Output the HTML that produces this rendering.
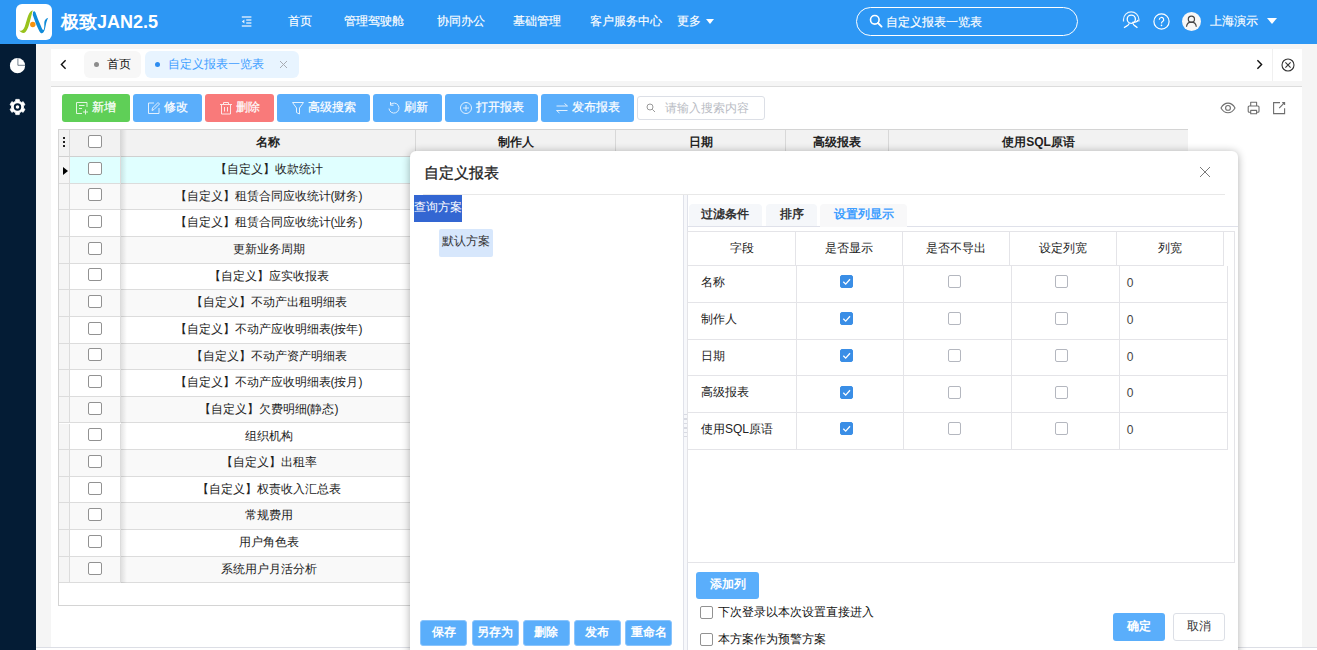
<!DOCTYPE html>
<html lang="zh">
<head>
<meta charset="utf-8">
<title>自定义报表一览表</title>
<style>
*{box-sizing:border-box;margin:0;padding:0}
html,body{width:1317px;height:650px;overflow:hidden}
body{position:relative;background:#f5f5f5;font-family:"Liberation Sans",sans-serif;font-size:12px;color:#222;line-height:1}
.abs{position:absolute}
.header{position:absolute;left:0;top:0;width:1317px;height:44px;background:#2d97f4}
.logo{position:absolute;left:16px;top:4px;width:36px;height:36px;background:#fff;border-radius:6px;overflow:hidden}
.brand{position:absolute;left:61px;top:11px;font-size:18px;font-weight:bold;color:#fff;line-height:22px;white-space:nowrap}
.nav{position:absolute;top:0;height:44px;line-height:42px;color:#fff;font-size:12px;white-space:nowrap;-webkit-text-stroke:.15px #fff}
.sidebar{position:absolute;left:0;top:44px;width:36px;height:606px;background:#041c35}
.tabbar{position:absolute;left:51px;top:49px;width:1251px;height:32px;background:#fff}
.tab{position:absolute;top:2px;height:27px;border-radius:6px;font-size:12px;line-height:27px;white-space:nowrap}
.panel{position:absolute;left:51px;top:86px;width:1251px;height:561px;background:#fff;border-top:1px solid #dcdcdc}
.foot{position:absolute;left:36px;top:647px;width:1281px;height:3px;background:#fff;border-top:1px solid #dcdee5}
.btn{position:absolute;top:94px;height:28px;border-radius:3px;color:#fff;font-size:12px;line-height:26px;white-space:nowrap}
.btn svg{position:absolute;top:7px;opacity:.82}
.btn span{position:absolute;top:0;-webkit-text-stroke:.2px #fff}
.grid{position:absolute;left:58px;top:129px;width:1130px;height:477px;border:1px solid #d4d4d4;border-right:none;background:#fff}
.gh{position:absolute;top:0;height:27px;background:#f2f2f2;border-right:1px solid #d8d8d8;border-bottom:1px solid #d0d0d0;text-align:center;font-weight:bold;line-height:24px;color:#222}
.gr{position:absolute;left:0;width:1127px;border-bottom:1px solid #dcdcdc}
.gr .c{position:absolute;top:0;height:100%;border-right:1px solid #dcdcdc}
.gr .t{position:absolute;left:62px;width:295px;text-align:center;top:0;white-space:nowrap}
.cb{position:absolute;width:13px;height:13px;border:1px solid #929292;border-radius:2px;background:#fff}
.dialog{position:absolute;left:410px;top:151px;width:828px;height:520px;background:#fff;border-radius:6px;box-shadow:0 1px 8px rgba(0,0,0,.32)}
.dt{position:absolute;left:14px;top:12px;font-size:15px;font-weight:normal;-webkit-text-stroke:.3px #222;color:#222;line-height:20px}
.sbtn{position:absolute;top:469px;height:26px;width:47px;background:#5aaefb;border-radius:3px;color:#fff;text-align:center;line-height:23px;font-size:12px;font-weight:bold;border:1px solid #8ac4fc}
.itab{position:absolute;top:53px;height:23px;background:#f5f7fa;border-radius:4px 4px 0 0;font-weight:bold;font-size:12px;line-height:21px;text-align:center;color:#333}
.th{position:absolute;top:0;height:34px;border-right:1px solid #e4e4e8;border-bottom:1px solid #e4e4e8;text-align:center;line-height:32px;color:#222}
.tr{position:absolute;left:0;width:540px;height:36.7px;border-bottom:1px solid #e4e4e8}
.tr .d{position:absolute;top:0;height:100%;border-right:1px solid #e4e4e8}
.ecb{position:absolute;width:13px;height:13px;border:1px solid #b4b7bf;border-radius:2px;background:#fff}
.ecb.on{background:#3a8ee6;border-color:#3a8ee6}
</style>
</head>
<body>
<!-- header -->
<div class="header">
  <div class="logo">
    <svg width="36" height="36" viewBox="0 0 36 36">
      <path d="M3.2 26.3C5 27.4 7 27 8.800 22.600L11.200 14.600C12.500 10 14 7 16.800 6.300C16 9 15.500 11.500 13.700 18.300C12.500 23 10.500 29 7.500 29C5.500 29 4 27.500 3.200 26.300Z" fill="#98c21d"/>
      <path d="M17 8.200C17.500 7 18.800 6.800 19.400 8.200L22 15.200L25.100 22.600C26 24.800 26.600 26 27.200 26C28 26 28.300 24 28.300 20.500C28 17 29 15 32.200 13.800C31 16 30.300 18.500 29.800 21C29 25 28 29.300 25.900 29.300C24 29.300 22.600 25.700 19.600 18.900L16.800 10.900Z" fill="#108bd9"/>
      <circle cx="16.800" cy="20.500" r="2.700" fill="#f5920f"/>
    </svg>
  </div>
  <div class="brand">极致JAN2.5</div>
  <svg class="abs" style="left:241px;top:15px" width="12" height="13" viewBox="0 0 12 13"><path d="M0.800 2H10.400M5.200 5H10.400M5.200 8H10.400M0.800 11H10.400" stroke="#cfe6fc" stroke-width="1.300" fill="none"/><path d="M3.400 4.600V8.400L0.800 6.500Z" fill="#e6f2fd"/></svg>
  <div class="nav" style="left:288px">首页</div>
  <div class="nav" style="left:344px">管理驾驶舱</div>
  <div class="nav" style="left:437px">协同办公</div>
  <div class="nav" style="left:513px">基础管理</div>
  <div class="nav" style="left:590px">客户服务中心</div>
  <div class="nav" style="left:677px">更多</div>
  <div class="abs" style="left:706px;top:19px;width:0;height:0;border-left:4.5px solid transparent;border-right:4.5px solid transparent;border-top:5px solid #fff"></div>
  <div class="abs" style="left:856px;top:7px;width:222px;height:29px;border:1px solid #fff;border-radius:15px"></div>
  <svg class="abs" style="left:869px;top:14px" width="14" height="14" viewBox="0 0 14 14"><circle cx="5.8" cy="5.8" r="4.3" stroke="#fff" stroke-width="1.6" fill="none"/><path d="M9 9L12.6 12.6" stroke="#fff" stroke-width="1.8" stroke-linecap="round"/></svg>
  <div class="nav" style="left:886px;top:1px">自定义报表一览表</div>
  <!-- headset -->
  <svg class="abs" style="left:1122px;top:11px" width="18" height="19" viewBox="0 0 18 19"><path d="M1.500 10.400V8.600a7.700 7.700 0 0 1 15.400 0V10.400" stroke="#e4f1fd" stroke-width="1.200" fill="none"/><circle cx="9.300" cy="8.200" r="4.100" stroke="#fff" stroke-width="1.300" fill="none"/><path d="M7.200 12.200C7 14.800 4 14.800 2.100 16.800M11 12.200C11.200 14.800 13.600 14.800 15.400 16.800M16 9C15.500 10.800 13 11.400 10.200 11.300" stroke="#fff" stroke-width="1.300" fill="none"/></svg>
  <!-- help -->
  <svg class="abs" style="left:1153px;top:13px" width="17" height="17" viewBox="0 0 17 17"><circle cx="8.5" cy="8.500" r="7.600" stroke="#fff" stroke-width="1.200" fill="none"/><path d="M6.300 6.700a2.200 2.200 0 1 1 3.300 1.900c-.8.500-1.100.9-1.100 1.800" stroke="#fff" stroke-width="1.200" fill="none"/><circle cx="8.500" cy="12.400" r=".8" fill="#fff"/></svg>
  <!-- avatar -->
  <div class="abs" style="left:1182px;top:12px;width:19px;height:19px;border-radius:50%;background:#f7f7f7"></div>
  <svg class="abs" style="left:1182px;top:12px" width="19" height="19" viewBox="0 0 19 19"><circle cx="9.400" cy="7.200" r="3.100" stroke="#444" stroke-width="1.200" fill="none"/><path d="M4.500 14.800c.3-3 2.300-4.600 4.900-4.600s4.600 1.600 4.900 4.600" stroke="#444" stroke-width="1.200" fill="none"/></svg>
  <div class="nav" style="left:1210px">上海演示</div>
  <div class="abs" style="left:1267px;top:18px;width:0;height:0;border-left:5.500px solid transparent;border-right:5.500px solid transparent;border-top:6px solid #fff"></div>
</div>

<!-- sidebar -->
<div class="sidebar">
  <svg class="abs" style="left:9px;top:13px" width="17" height="17" viewBox="0 0 17 17"><circle cx="8.500" cy="8.700" r="7.600" fill="#fff"/><path d="M8.900 1.200V8.300H16" stroke="#041c35" stroke-opacity=".55" stroke-width="1" fill="none"/></svg>
  <svg class="abs" style="left:9px;top:54px" width="17" height="18" viewBox="0 0 17 18"><path d="M6.51 3.23L6.75 1.40L10.25 1.40L10.49 3.23L12.50 4.40L14.20 3.68L15.96 6.72L14.49 7.84L14.49 10.16L15.96 11.28L14.20 14.32L12.50 13.60L10.49 14.77L10.25 16.60L6.75 16.60L6.51 14.77L4.50 13.60L2.80 14.32L1.04 11.28L2.51 10.16L2.51 7.84L1.04 6.72L2.80 3.68L4.50 4.40Z" fill="#fff" stroke="#fff" stroke-width=".8" stroke-linejoin="round"/><circle cx="8.500" cy="9" r="2.750" fill="#fff" stroke="#041c35" stroke-width="1.900"/></svg>
</div>

<!-- tab bar -->
<div class="tabbar">
  <svg class="abs" style="left:8px;top:9px" width="9" height="13" viewBox="0 0 9 13"><path d="M6.600 2.200L2.400 6.500L6.600 10.800" stroke="#111" stroke-width="1.400" fill="none"/></svg>
  <div class="tab" style="left:33px;width:57px;background:#f7f7f7;color:#111">
    <div class="abs" style="left:10px;top:11px;width:5px;height:5px;border-radius:50%;background:#8c8c8c"></div>
    <span class="abs" style="left:23px;top:0">首页</span>
  </div>
  <div class="tab" style="left:94px;width:154px;background:#e8f4ff;color:#409eff">
    <div class="abs" style="left:10px;top:11px;width:5px;height:5px;border-radius:50%;background:#2d8cf0"></div>
    <span class="abs" style="left:23px;top:0">自定义报表一览表</span>
    <svg class="abs" style="left:134px;top:9px" width="9" height="9" viewBox="0 0 9 9"><path d="M1 1L8 8M8 1L1 8" stroke="#a8abb2" stroke-width="1" fill="none"/></svg>
  </div>
  <svg class="abs" style="left:1204px;top:9px" width="9" height="13" viewBox="0 0 9 13"><path d="M2.400 2.200L6.600 6.500L2.400 10.800" stroke="#111" stroke-width="1.400" fill="none"/></svg>
  <div class="abs" style="left:1221px;top:0;width:1px;height:32px;background:#f0f0f0"></div>
  <svg class="abs" style="left:1230px;top:9px" width="14" height="14" viewBox="0 0 14 14"><circle cx="7" cy="7" r="6" stroke="#333" stroke-width="1.100" fill="none"/><path d="M4.400 4.400L9.600 9.600M9.600 4.400L4.400 9.600" stroke="#333" stroke-width="1.100"/></svg>
</div>

<!-- content panel -->
<div class="panel"></div>
<div class="foot"></div>

<!-- toolbar -->
<div class="btn" style="left:62px;width:68px;background:#5fcf57"><svg style="left:13px" width="14" height="14" viewBox="0 0 14 14"><path d="M12 6V1.500H1.500V12.500H7M4 4.500H9.500M4 7.500H7M10.500 8.500V13.500M8 11H13" stroke="#fff" stroke-width="1" fill="none"/></svg><span style="left:30px">新增</span></div>
<div class="btn" style="left:133px;width:69px;background:#5aaefb"><svg style="left:14px" width="14" height="14" viewBox="0 0 14 14"><path d="M7 2H1.500V12.500H12V7M5 9.500L5.500 7L11 1.500L12.500 3L7 8.500Z" stroke="#fff" stroke-width="1" fill="none"/></svg><span style="left:31px">修改</span></div>
<div class="btn" style="left:205px;width:69px;background:#f97a7a"><svg style="left:14px" width="14" height="14" viewBox="0 0 14 14"><path d="M1 3.500H13M4.500 3.500V1.500H9.500V3.500M2.500 3.500V13H11.500V3.500M5.500 6V10.500M8.500 6V10.500" stroke="#fff" stroke-width="1" fill="none"/></svg><span style="left:31px">删除</span></div>
<div class="btn" style="left:277px;width:93px;background:#5aaefb"><svg style="left:14px" width="14" height="14" viewBox="0 0 14 14"><path d="M1.500 1.500H12.500L8.500 7V13L5.500 11.500V7Z" stroke="#fff" stroke-width="1" fill="none"/></svg><span style="left:31px">高级搜索</span></div>
<div class="btn" style="left:373px;width:69px;background:#5aaefb"><svg style="left:14px" width="14" height="14" viewBox="0 0 14 14"><path d="M3.200 3.800A5 5 0 1 1 2 7.500" stroke="#fff" stroke-width="1" fill="none"/><path d="M3.500 1V4.200H6.500" stroke="#fff" stroke-width="1" fill="none"/></svg><span style="left:31px">刷新</span></div>
<div class="btn" style="left:445px;width:93px;background:#5aaefb"><svg style="left:14px" width="14" height="14" viewBox="0 0 14 14"><circle cx="7" cy="7" r="5.500" stroke="#fff" stroke-width="1" fill="none"/><path d="M7 4V10M4 7H10" stroke="#fff" stroke-width="1"/></svg><span style="left:31px">打开报表</span></div>
<div class="btn" style="left:541px;width:93px;background:#5aaefb"><svg style="left:14px" width="14" height="14" viewBox="0 0 14 14"><path d="M1.500 5H12.500L9.500 2.500M12.500 9.500H1.500L4.500 12" stroke="#fff" stroke-width="1" fill="none"/></svg><span style="left:31px">发布报表</span></div>
<div class="abs" style="left:637px;top:96px;width:128px;height:24px;border:1px solid #dcdfe6;border-radius:3px;background:#fff">
  <svg class="abs" style="left:8px;top:6px" width="10" height="10" viewBox="0 0 10 10"><circle cx="4" cy="4" r="3" stroke="#999" stroke-width="1" fill="none"/><path d="M6.300 6.300L9 9" stroke="#999" stroke-width="1"/></svg>
  <span class="abs" style="left:27px;top:5px;color:#b9bcc4;font-size:12px">请输入搜索内容</span>
</div>
<svg class="abs" style="left:1220px;top:101px" width="16" height="14" viewBox="0 0 16 14"><path d="M1 6.900C2.800 3.700 5.300 2.100 8 2.100S13.200 3.700 15 6.900C13.200 10.100 10.700 11.700 8 11.700S2.800 10.100 1 6.900Z" stroke="#6e6e6e" stroke-width="1.100" fill="none"/><circle cx="8" cy="6.900" r="2.400" stroke="#6e6e6e" stroke-width="1.100" fill="none"/></svg>
<svg class="abs" style="left:1246px;top:101px" width="15" height="14" viewBox="0 0 15 14"><path d="M4.700 5V1.200H10.600V5M4.700 11.300H3.200A1 1 0 0 1 2.200 10.300V6A1 1 0 0 1 3.200 5H12A1 1 0 0 1 13 6V10.300A1 1 0 0 1 12 11.300H10.600M4.700 9.400H10.600V12.800H4.700Z" stroke="#6e6e6e" stroke-width="1.100" fill="none" stroke-linejoin="round"/></svg>
<svg class="abs" style="left:1272px;top:101px" width="14" height="14" viewBox="0 0 14 14"><path d="M8 1.600H1.600V12.600H12.600V7.200M7.200 7.200L12.300 1.800M10.200 1.600H12.600V4" stroke="#6e6e6e" stroke-width="1.100" fill="none"/></svg>

<!-- grid -->
<div class="grid" id="grid">
<div class="gh" style="left:0px;width:11px"></div>
<div class="gh" style="left:11px;width:51px"></div>
<div class="gh" style="left:62px;width:295px">名称</div>
<div class="gh" style="left:357px;width:200px">制作人</div>
<div class="gh" style="left:557px;width:170px">日期</div>
<div class="gh" style="left:727px;width:103px">高级报表</div>
<div class="gh" style="left:830px;width:299px;border-right:none">使用SQL原语</div>
<div class="abs" style="left:4px;top:7px;width:2px;height:2px;background:#222;box-shadow:0 4px 0 #222,0 8px 0 #222"></div>
<div class="cb" style="left:29px;top:5.300000000000011px;width:14px"></div>
<div class="gr" style="top:27.00px;height:26.65px;background:#e0ffff;line-height:25.65px"><div class="c" style="left:0;width:11px;background:#f5f5f5"></div><div class="c" style="left:11px;width:51px"></div><div class="c" style="left:62px;width:295px"></div><div class="t">【自定义】收款统计</div><div class="cb" style="left:29px;top:4.8px;width:14px"></div><div class="abs" style="left:4px;top:10px;width:0;height:0;border-top:4px solid transparent;border-bottom:4px solid transparent;border-left:5px solid #000"></div></div>
<div class="gr" style="top:53.65px;height:26.65px;background:#f9f9f9;line-height:25.65px"><div class="c" style="left:0;width:11px;background:#f5f5f5"></div><div class="c" style="left:11px;width:51px"></div><div class="c" style="left:62px;width:295px"></div><div class="t">【自定义】租赁合同应收统计(财务)</div><div class="cb" style="left:29px;top:4.8px;width:14px"></div></div>
<div class="gr" style="top:80.30px;height:26.65px;background:#fff;line-height:25.65px"><div class="c" style="left:0;width:11px;background:#f5f5f5"></div><div class="c" style="left:11px;width:51px"></div><div class="c" style="left:62px;width:295px"></div><div class="t">【自定义】租赁合同应收统计(业务)</div><div class="cb" style="left:29px;top:4.8px;width:14px"></div></div>
<div class="gr" style="top:106.95px;height:26.65px;background:#f9f9f9;line-height:25.65px"><div class="c" style="left:0;width:11px;background:#f5f5f5"></div><div class="c" style="left:11px;width:51px"></div><div class="c" style="left:62px;width:295px"></div><div class="t">更新业务周期</div><div class="cb" style="left:29px;top:4.8px;width:14px"></div></div>
<div class="gr" style="top:133.60px;height:26.65px;background:#fff;line-height:25.65px"><div class="c" style="left:0;width:11px;background:#f5f5f5"></div><div class="c" style="left:11px;width:51px"></div><div class="c" style="left:62px;width:295px"></div><div class="t">【自定义】应实收报表</div><div class="cb" style="left:29px;top:4.8px;width:14px"></div></div>
<div class="gr" style="top:160.25px;height:26.65px;background:#f9f9f9;line-height:25.65px"><div class="c" style="left:0;width:11px;background:#f5f5f5"></div><div class="c" style="left:11px;width:51px"></div><div class="c" style="left:62px;width:295px"></div><div class="t">【自定义】不动产出租明细表</div><div class="cb" style="left:29px;top:4.8px;width:14px"></div></div>
<div class="gr" style="top:186.90px;height:26.65px;background:#fff;line-height:25.65px"><div class="c" style="left:0;width:11px;background:#f5f5f5"></div><div class="c" style="left:11px;width:51px"></div><div class="c" style="left:62px;width:295px"></div><div class="t">【自定义】不动产应收明细表(按年)</div><div class="cb" style="left:29px;top:4.8px;width:14px"></div></div>
<div class="gr" style="top:213.55px;height:26.65px;background:#f9f9f9;line-height:25.65px"><div class="c" style="left:0;width:11px;background:#f5f5f5"></div><div class="c" style="left:11px;width:51px"></div><div class="c" style="left:62px;width:295px"></div><div class="t">【自定义】不动产资产明细表</div><div class="cb" style="left:29px;top:4.8px;width:14px"></div></div>
<div class="gr" style="top:240.20px;height:26.65px;background:#fff;line-height:25.65px"><div class="c" style="left:0;width:11px;background:#f5f5f5"></div><div class="c" style="left:11px;width:51px"></div><div class="c" style="left:62px;width:295px"></div><div class="t">【自定义】不动产应收明细表(按月)</div><div class="cb" style="left:29px;top:4.8px;width:14px"></div></div>
<div class="gr" style="top:266.85px;height:26.65px;background:#f9f9f9;line-height:25.65px"><div class="c" style="left:0;width:11px;background:#f5f5f5"></div><div class="c" style="left:11px;width:51px"></div><div class="c" style="left:62px;width:295px"></div><div class="t">【自定义】欠费明细(静态)</div><div class="cb" style="left:29px;top:4.8px;width:14px"></div></div>
<div class="gr" style="top:293.50px;height:26.65px;background:#fff;line-height:25.65px"><div class="c" style="left:0;width:11px;background:#f5f5f5"></div><div class="c" style="left:11px;width:51px"></div><div class="c" style="left:62px;width:295px"></div><div class="t">组织机构</div><div class="cb" style="left:29px;top:4.8px;width:14px"></div></div>
<div class="gr" style="top:320.15px;height:26.65px;background:#f9f9f9;line-height:25.65px"><div class="c" style="left:0;width:11px;background:#f5f5f5"></div><div class="c" style="left:11px;width:51px"></div><div class="c" style="left:62px;width:295px"></div><div class="t">【自定义】出租率</div><div class="cb" style="left:29px;top:4.8px;width:14px"></div></div>
<div class="gr" style="top:346.80px;height:26.65px;background:#fff;line-height:25.65px"><div class="c" style="left:0;width:11px;background:#f5f5f5"></div><div class="c" style="left:11px;width:51px"></div><div class="c" style="left:62px;width:295px"></div><div class="t">【自定义】权责收入汇总表</div><div class="cb" style="left:29px;top:4.8px;width:14px"></div></div>
<div class="gr" style="top:373.45px;height:26.65px;background:#f9f9f9;line-height:25.65px"><div class="c" style="left:0;width:11px;background:#f5f5f5"></div><div class="c" style="left:11px;width:51px"></div><div class="c" style="left:62px;width:295px"></div><div class="t">常规费用</div><div class="cb" style="left:29px;top:4.8px;width:14px"></div></div>
<div class="gr" style="top:400.10px;height:26.65px;background:#fff;line-height:25.65px"><div class="c" style="left:0;width:11px;background:#f5f5f5"></div><div class="c" style="left:11px;width:51px"></div><div class="c" style="left:62px;width:295px"></div><div class="t">用户角色表</div><div class="cb" style="left:29px;top:4.8px;width:14px"></div></div>
<div class="gr" style="top:426.75px;height:26.65px;background:#f9f9f9;line-height:25.65px"><div class="c" style="left:0;width:11px;background:#f5f5f5"></div><div class="c" style="left:11px;width:51px"></div><div class="c" style="left:62px;width:295px"></div><div class="t">系统用户月活分析</div><div class="cb" style="left:29px;top:4.8px;width:14px"></div></div>
<div class="abs" style="left:62px;top:0;width:6px;height:453.40px;background:linear-gradient(to right,rgba(0,0,0,.10),rgba(0,0,0,0))"></div>
</div>

<!-- dialog -->
<div class="dialog" id="dlg">
<div class="dt">自定义报表</div>
<svg class="abs" style="left:789px;top:15px" width="12" height="12" viewBox="0 0 12 12"><path d="M1 1L11 11M11 1L1 11" stroke="#7a7a7a" stroke-width="1" fill="none"/></svg>
<div class="abs" style="left:13px;top:43px;width:802px;height:1px;background:#e8e8e8"></div>
<div class="abs" style="left:4px;top:44px;width:48px;height:27px;background:#3366d2;color:#fff;font-size:12px;line-height:25px;text-align:center;white-space:nowrap">查询方案</div>
<div class="abs" style="left:29px;top:78px;width:54px;height:28px;background:#d7e7fc;border-radius:2px;color:#333;font-size:12px;line-height:25px;text-align:center;white-space:nowrap">默认方案</div>
<div class="sbtn" style="left:10.0px">保存</div>
<div class="sbtn" style="left:61.5px">另存为</div>
<div class="sbtn" style="left:112.5px">删除</div>
<div class="sbtn" style="left:163.5px">发布</div>
<div class="sbtn" style="left:215.0px">重命名</div>
<div class="abs" style="left:273px;top:44px;width:5px;height:476px;border-left:1px solid #e0e2ea;border-right:1px solid #e0e2ea;background:#f7f8fb"></div>
<div class="abs" style="left:274px;top:263px;width:3px;height:25px;background:repeating-linear-gradient(to bottom,#d8dae2 0,#d8dae2 1.300px,#f7f8fb 1.300px,#f7f8fb 4.400px)"></div>
<div class="abs" style="left:278px;top:75px;width:550px;height:1px;background:#dfe1ea"></div>
<div class="itab" style="left:278.5px;width:73.5px;height:22px">过滤条件</div>
<div class="itab" style="left:356px;width:51px;height:22px">排序</div>
<div class="itab" style="left:410px;width:87px;color:#409eff;background:#f8f8f9">设置列显示</div>
<div class="abs" id="tbl" style="left:277px;top:80px;width:548px;height:332px;border:1px solid #e4e4e8">
<div class="th" style="left:0.0px;width:108.0px">字段</div>
<div class="th" style="left:108.0px;width:107.0px">是否显示</div>
<div class="th" style="left:215.0px;width:107.0px">是否不导出</div>
<div class="th" style="left:322.0px;width:107.0px">设定列宽</div>
<div class="th" style="left:429.0px;width:107.0px">列宽</div>
<div class="tr" style="top:34.0px;height:36.8px"><div class="d" style="left:0.0px;width:109.0px"></div><div class="d" style="left:109.0px;width:107.0px"></div><div class="d" style="left:216.0px;width:108.0px"></div><div class="d" style="left:324.0px;width:108.0px"></div><div class="d" style="left:432.0px;width:108.0px"></div><span class="abs" style="left:13px;top:0;line-height:33.4px;white-space:nowrap;color:#222">名称</span><div class="ecb on" style="left:152.2px;top:9.3px"><svg class="abs" style="left:-1px;top:-1px" width="13" height="13" viewBox="0 0 13 13"><path d="M3.300 6.700L5.700 9.100L10 4.300" stroke="#fff" stroke-width="1.3" fill="none"/></svg></div><div class="ecb" style="left:260.0px;top:9.3px"></div><div class="ecb" style="left:367.3px;top:9.3px"></div><span class="abs" style="left:438.8px;top:1px;line-height:33.4px;color:#444;font-size:12px">0</span></div>
<div class="tr" style="top:70.8px;height:36.8px"><div class="d" style="left:0.0px;width:109.0px"></div><div class="d" style="left:109.0px;width:107.0px"></div><div class="d" style="left:216.0px;width:108.0px"></div><div class="d" style="left:324.0px;width:108.0px"></div><div class="d" style="left:432.0px;width:108.0px"></div><span class="abs" style="left:13px;top:0;line-height:33.4px;white-space:nowrap;color:#222">制作人</span><div class="ecb on" style="left:152.2px;top:9.3px"><svg class="abs" style="left:-1px;top:-1px" width="13" height="13" viewBox="0 0 13 13"><path d="M3.300 6.700L5.700 9.100L10 4.300" stroke="#fff" stroke-width="1.3" fill="none"/></svg></div><div class="ecb" style="left:260.0px;top:9.3px"></div><div class="ecb" style="left:367.3px;top:9.3px"></div><span class="abs" style="left:438.8px;top:1px;line-height:33.4px;color:#444;font-size:12px">0</span></div>
<div class="tr" style="top:107.6px;height:36.8px"><div class="d" style="left:0.0px;width:109.0px"></div><div class="d" style="left:109.0px;width:107.0px"></div><div class="d" style="left:216.0px;width:108.0px"></div><div class="d" style="left:324.0px;width:108.0px"></div><div class="d" style="left:432.0px;width:108.0px"></div><span class="abs" style="left:13px;top:0;line-height:33.4px;white-space:nowrap;color:#222">日期</span><div class="ecb on" style="left:152.2px;top:9.3px"><svg class="abs" style="left:-1px;top:-1px" width="13" height="13" viewBox="0 0 13 13"><path d="M3.300 6.700L5.700 9.100L10 4.300" stroke="#fff" stroke-width="1.3" fill="none"/></svg></div><div class="ecb" style="left:260.0px;top:9.3px"></div><div class="ecb" style="left:367.3px;top:9.3px"></div><span class="abs" style="left:438.8px;top:1px;line-height:33.4px;color:#444;font-size:12px">0</span></div>
<div class="tr" style="top:144.4px;height:36.8px"><div class="d" style="left:0.0px;width:109.0px"></div><div class="d" style="left:109.0px;width:107.0px"></div><div class="d" style="left:216.0px;width:108.0px"></div><div class="d" style="left:324.0px;width:108.0px"></div><div class="d" style="left:432.0px;width:108.0px"></div><span class="abs" style="left:13px;top:0;line-height:33.4px;white-space:nowrap;color:#222">高级报表</span><div class="ecb on" style="left:152.2px;top:9.3px"><svg class="abs" style="left:-1px;top:-1px" width="13" height="13" viewBox="0 0 13 13"><path d="M3.300 6.700L5.700 9.100L10 4.300" stroke="#fff" stroke-width="1.3" fill="none"/></svg></div><div class="ecb" style="left:260.0px;top:9.3px"></div><div class="ecb" style="left:367.3px;top:9.3px"></div><span class="abs" style="left:438.8px;top:1px;line-height:33.4px;color:#444;font-size:12px">0</span></div>
<div class="tr" style="top:181.2px;height:36.8px"><div class="d" style="left:0.0px;width:109.0px"></div><div class="d" style="left:109.0px;width:107.0px"></div><div class="d" style="left:216.0px;width:108.0px"></div><div class="d" style="left:324.0px;width:108.0px"></div><div class="d" style="left:432.0px;width:108.0px"></div><span class="abs" style="left:13px;top:0;line-height:33.4px;white-space:nowrap;color:#222">使用SQL原语</span><div class="ecb on" style="left:152.2px;top:9.3px"><svg class="abs" style="left:-1px;top:-1px" width="13" height="13" viewBox="0 0 13 13"><path d="M3.300 6.700L5.700 9.100L10 4.300" stroke="#fff" stroke-width="1.3" fill="none"/></svg></div><div class="ecb" style="left:260.0px;top:9.3px"></div><div class="ecb" style="left:367.3px;top:9.3px"></div><span class="abs" style="left:438.8px;top:1px;line-height:33.4px;color:#444;font-size:12px">0</span></div>
</div>
<div class="abs" style="left:286px;top:421px;width:63px;height:27px;background:#5aaefb;border-radius:3px;color:#fff;font-size:12px;font-weight:bold;line-height:25px;text-align:center">添加列</div>
<div class="cb" style="left:290px;top:454.5px"></div><span class="abs" style="left:307.5px;top:455px;color:#111;white-space:nowrap;font-size:12px;line-height:13px">下次登录以本次设置直接进入</span>
<div class="cb" style="left:290px;top:481.5px"></div><span class="abs" style="left:307.5px;top:482px;color:#111;white-space:nowrap;font-size:12px;line-height:13px">本方案作为预警方案</span>
<div class="abs" style="left:703px;top:462px;width:52px;height:28px;background:#5aaefb;border-radius:3px;color:#fff;font-size:12px;font-weight:bold;line-height:26px;text-align:center">确定</div>
<div class="abs" style="left:763px;top:462px;width:52px;height:28px;background:#fff;border:1px solid #dcdfe6;border-radius:3px;color:#333;font-size:12px;line-height:25px;text-align:center">取消</div>
</div>
</body>
</html>
